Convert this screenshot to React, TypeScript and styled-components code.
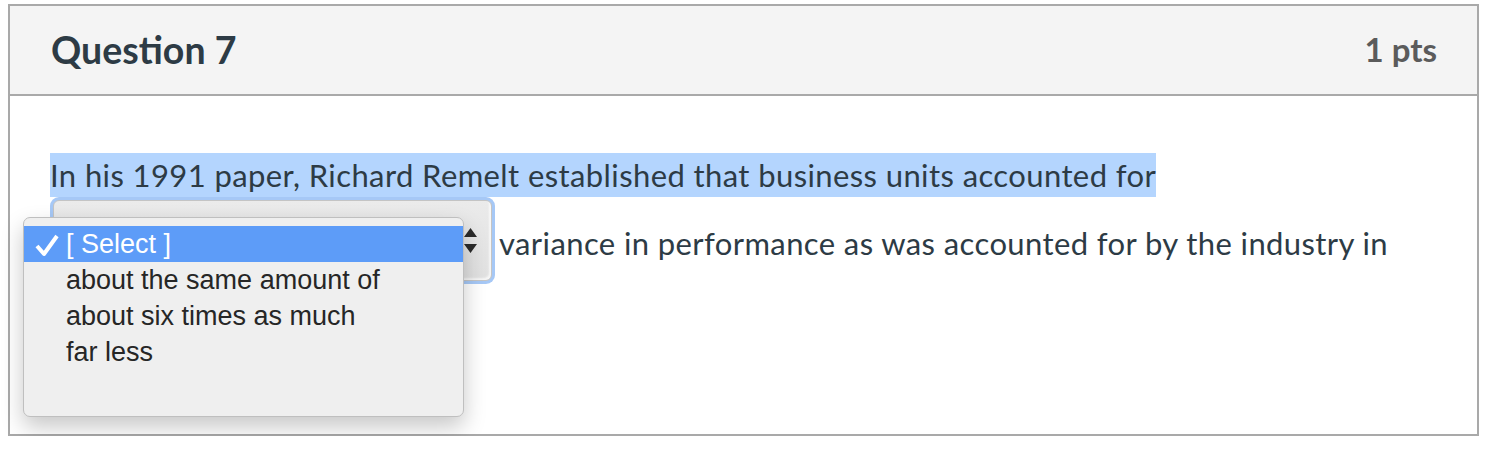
import React from "react"
import styled, { createGlobalStyle } from "styled-components"

const GlobalStyle = createGlobalStyle`
  body {
    margin: 0;
    background: #fff;
    font-family: Lato, "Open Sans", sans-serif;
  }
`

const Page = styled.div`
  padding: 4px 0 0 8px;
`

const Card = styled.section`
  width: 1471px;
  height: 432px;
  box-sizing: border-box;
  border: 2px solid #a9a9a9;
  display: flex;
  flex-direction: column;
`

const Header = styled.header`
  height: 90px;
  box-sizing: border-box;
  background: #f4f4f4;
  border-bottom: 2px solid #a9a9a9;
  display: flex;
  align-items: center;
  justify-content: space-between;
  padding: 0 40px 2px 41px;
`

const Title = styled.h2`
  margin: 0;
  font-size: 37.5px;
  font-weight: 700;
  color: #2d3b45;
`

const Points = styled.span`
  font-size: 33px;
  font-weight: 700;
  color: #5b5b5b;
`

const Body = styled.div`
  padding: 57px 40px 0 40px;
`

const Text = styled.p`
  margin: 0;
  font-size: 31px;
  letter-spacing: 0.4px;
  line-height: 44px;
  color: #2d3b45;
`

const Selected = styled.span`
  background: #b4d5fe;
  padding: 3px 0;
`

const SelectWrap = styled.span`
  position: relative;
  display: inline-block;
  vertical-align: middle;
  margin: 0 4px 14px 0;
  padding: 3px;
  border-radius: 9px;
  background: #a6c8f6;
  letter-spacing: 0;
`

const SelectBox = styled.span`
  display: flex;
  align-items: center;
  justify-content: flex-end;
  width: 439px;
  height: 81px;
  box-sizing: border-box;
  padding-right: 13px;
  border: 1px solid #c4c4c4;
  border-radius: 6px;
  background: linear-gradient(#ebebeb, #e0e0e0);
  box-shadow: inset -2px -2px 2px rgba(255, 255, 255, 0.7);
`

const Menu = styled.div`
  position: absolute;
  left: -27px;
  top: 20px;
  z-index: 2;
  width: 441px;
  height: 200px;
  box-sizing: border-box;
  padding-top: 8px;
  border: 1px solid #bfbfbf;
  border-radius: 7px;
  background: #efefef;
  box-shadow: 0 10px 22px rgba(0, 0, 0, 0.22);
  font-family: "Liberation Sans", Arial, sans-serif;
  font-size: 27px;
  line-height: 36px;
`

const Option = styled.div<{ $active?: boolean }>`
  position: relative;
  height: 36px;
  padding-left: 42px;
  color: ${(p) => (p.$active ? "#fff" : "#262626")};
  background: ${(p) => (p.$active ? "#5d9cf8" : "transparent")};
  white-space: nowrap;
`

const Check = styled.svg`
  position: absolute;
  left: 10px;
  top: 7px;
`

const options = ["[ Select ]", "about the same amount of", "about six times as much", "far less"]

export default function App() {
  return (
    <Page>
      <GlobalStyle />
      <Card>
        <Header>
          <Title>Question 7</Title>
          <Points>1 pts</Points>
        </Header>
        <Body>
          <Text>
            <Selected>In his 1991 paper, Richard Remelt established that business units accounted for</Selected>{" "}
            <SelectWrap>
              <SelectBox>
                <svg width="15" height="28" viewBox="0 0 15 28">
                  <path d="M1 10 L7.5 1 L14 10 Z M1 17 L7.5 26 L14 17 Z" fill="#2b2b2b" />
                </svg>
              </SelectBox>
              <Menu>
                {options.map((o, i) => (
                  <Option key={o} $active={i === 0}>
                    {i === 0 && (
                      <Check width="26" height="24" viewBox="0 0 26 24">
                        <polyline points="3,13 10,21 23,3" fill="none" stroke="#fff" strokeWidth="4" strokeLinejoin="round" />
                      </Check>
                    )}
                    {o}
                  </Option>
                ))}
              </Menu>
            </SelectWrap>
            variance in performance as was accounted for by the industry in
          </Text>
        </Body>
      </Card>
    </Page>
  )
}
